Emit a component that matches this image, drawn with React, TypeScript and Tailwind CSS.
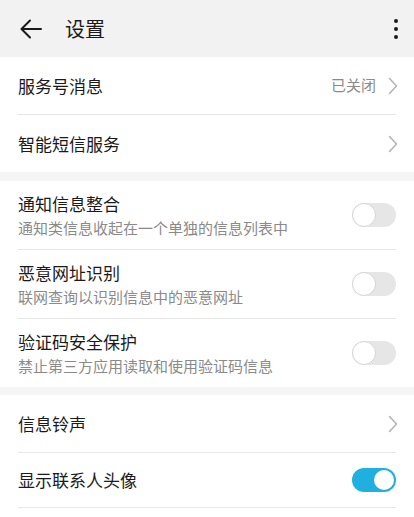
import React from "react";

const Chevron = () => (
  <svg width="10" height="18" viewBox="0 0 10 18" className="shrink-0">
    <path d="M1.5 1.5 L8.5 9 L1.5 16.5" fill="none" stroke="#b5b5b5" strokeWidth="1.6" strokeLinecap="round" strokeLinejoin="round" />
  </svg>
);

const Toggle = ({ on }: { on?: boolean }) =>
  on ? (
    <div className="w-[44px] h-[24px] rounded-full bg-[#1fb0e0] flex items-center justify-end pr-[2px] shrink-0">
      <div className="w-[20px] h-[20px] rounded-full bg-white" />
    </div>
  ) : (
    <div className="w-[44px] h-[24px] rounded-full bg-[#e6e6e6] flex items-center shrink-0">
      <div className="w-[24px] h-[24px] rounded-full bg-white border border-[#d6d6d6]" />
    </div>
  );

const Divider = () => <div className="mx-[18px] h-px bg-[#e6e6e6]" />;

const NavRow = ({ title, value }: { title: string; value?: string }) => (
  <div className="h-[57px] flex items-center pl-[18px] pr-[16px]">
    <div className="flex-1 text-[17px] text-[#1a1a1a]">{title}</div>
    {value && <div className="text-[15px] text-[#8a8a8a] mr-[12px]">{value}</div>}
    <Chevron />
  </div>
);

const ToggleRow = ({ title, sub, on }: { title: string; sub: string; on?: boolean }) => (
  <div className="h-[68px] flex items-center pl-[18px] pr-[18px]">
    <div className="flex-1 flex flex-col">
      <div className="text-[17px] leading-[24px] text-[#1a1a1a]">{title}</div>
      <div className="text-[15px] leading-[22px] text-[#8a8a8a] mt-[1px]">{sub}</div>
    </div>
    <Toggle on={on} />
  </div>
);

export default function App() {
  return (
    <div
      className="w-[414px] h-[517px] overflow-hidden bg-[#f5f5f5]"
      style={{ fontFamily: '"Noto Sans CJK SC", "Noto Sans", sans-serif' }}
    >
      <div className="h-[57px] bg-[#f2f2f2] flex items-center pl-[19px] pr-[14px]">
        <svg width="24" height="22" viewBox="0 0 24 22" className="shrink-0">
          <path d="M22 11 H3 M11 2.5 L2.5 11 L11 19.5" fill="none" stroke="#1a1a1a" strokeWidth="2" strokeLinecap="round" strokeLinejoin="round" />
        </svg>
        <div className="ml-[22px] flex-1 text-[20px] text-[#1a1a1a]">设置</div>
        <div className="flex flex-col items-center gap-[4px] w-[8px]">
          <div className="w-[4px] h-[4px] rounded-full bg-[#1a1a1a]" />
          <div className="w-[4px] h-[4px] rounded-full bg-[#1a1a1a]" />
          <div className="w-[4px] h-[4px] rounded-full bg-[#1a1a1a]" />
        </div>
      </div>

      <div className="bg-white">
        <NavRow title="服务号消息" value="已关闭" />
        <Divider />
        <NavRow title="智能短信服务" />
      </div>

      <div className="h-[9px]" />

      <div className="bg-white">
        <ToggleRow title="通知信息整合" sub="通知类信息收起在一个单独的信息列表中" />
        <Divider />
        <ToggleRow title="恶意网址识别" sub="联网查询以识别信息中的恶意网址" />
        <Divider />
        <ToggleRow title="验证码安全保护" sub="禁止第三方应用读取和使用验证码信息" />
      </div>

      <div className="h-[8px]" />

      <div className="bg-white">
        <NavRow title="信息铃声" />
        <Divider />
        <div className="h-[54px] flex items-center pl-[18px] pr-[18px]">
          <div className="flex-1 text-[17px] text-[#1a1a1a]">显示联系人头像</div>
          <Toggle on />
        </div>
        <Divider />
        <div className="h-[20px]" />
      </div>
    </div>
  );
}
